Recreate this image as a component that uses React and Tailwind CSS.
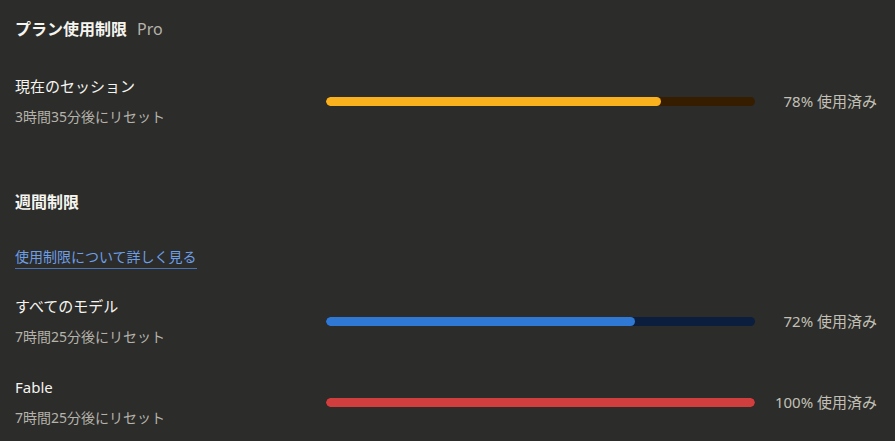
import React from 'react';

const rows = {
  session: { name: '現在のセッション', reset: '3時間35分後にリセット', pct: 78, fill: 'bg-[#f9b11e]', track: 'bg-[#371d00]' },
  all: { name: 'すべてのモデル', reset: '7時間25分後にリセット', pct: 72, fill: 'bg-[#2f79d5]', track: 'bg-[#0b1e3d]' },
  fable: { name: 'Fable', reset: '7時間25分後にリセット', pct: 100, fill: 'bg-[#d03e3e]', track: 'bg-[#3a1414]' },
};

const UsageRow = ({ row }) => (
  <div className="grid grid-cols-[311px_429px_1fr] items-center">
    <div>
      <div className="text-[15px] leading-[22px] text-[#f5f4ef]">{row.name}</div>
      <div className="text-[14px] leading-[22px] mt-[9px] text-[#b5b3ab]">{row.reset}</div>
    </div>
    <div className={`h-[9px] rounded-full overflow-hidden ${row.track}`}>
      <div className={`h-full rounded-full ${row.fill}`} style={{ width: `${row.pct}%` }} />
    </div>
    <div className="text-right text-[15px] text-[#c2c0b6]">{row.pct}% 使用済み</div>
  </div>
);

export default function App() {
  return (
    <div
      className="w-[895px] h-[441px] overflow-hidden bg-[#2c2c2a] pl-[15px] pr-[18px] pt-[17px]"
      style={{ fontFamily: '"Noto Sans", "Noto Sans CJK JP", sans-serif' }}
    >
      <div className="flex items-baseline gap-[10px]">
        <h1 className="text-[16px] leading-[24px] font-bold text-[#f5f4ef]">プラン使用制限</h1>
        <span className="text-[16px] text-[#b5b3ab]">Pro</span>
      </div>

      <div className="mt-[34px]">
        <UsageRow row={rows.session} />
      </div>

      <h2 className="mt-[62px] text-[16px] leading-[24px] font-bold text-[#f5f4ef]">週間制限</h2>

      <a className="inline-block mt-[32px] text-[14px] leading-[22px] text-[#6d9ee6] border-b border-[#4b72b0]">
        使用制限について詳しく見る
      </a>

      <div className="mt-[26px] flex flex-col gap-[28px]">
        <UsageRow row={rows.all} />
        <UsageRow row={rows.fable} />
      </div>
    </div>
  );
}
